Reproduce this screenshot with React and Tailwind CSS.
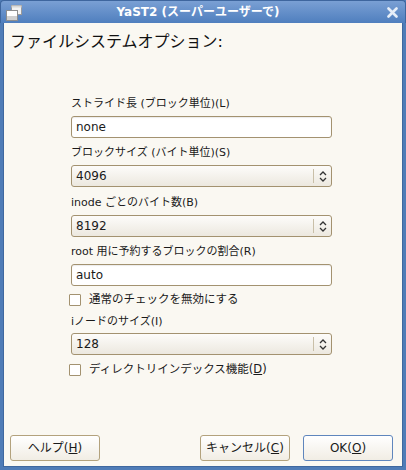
import React from "react";

const font = { fontFamily: '"DejaVu Sans", "Noto Sans CJK JP", sans-serif' };

function Field({ value }) {
  return (
    <div className="h-[22px] w-[261px] rounded-[3px] border border-[#a39270] bg-white flex items-center px-[4px] text-[12px] text-[#1a1a1a] shadow-[inset_0_1px_1px_rgba(0,0,0,0.08)]">
      {value}
    </div>
  );
}

function Select({ value }) {
  return (
    <div className="h-[22px] w-[261px] rounded-[3px] border border-[#a39270] bg-gradient-to-b from-[#fdfcfa] to-[#ece8df] flex items-center text-[12px] text-[#1a1a1a]">
      <div className="flex-1 px-[4px]">{value}</div>
      <div className="h-[14px] w-px bg-[#c9bfa8]" />
      <div className="w-[17px] flex items-center justify-center">
        <svg width="8" height="11" viewBox="0 0 8 11">
          <path d="M1 4 L4 1 L7 4" fill="none" stroke="#333" strokeWidth="1.3" />
          <path d="M1 7 L4 10 L7 7" fill="none" stroke="#333" strokeWidth="1.3" />
        </svg>
      </div>
    </div>
  );
}

function Check({ children }) {
  return (
    <div className="h-[16px] flex items-center -ml-[2px]">
      <div className="w-[12px] h-[12px] rounded-[1px] border border-[#a39270] bg-white" />
      <span className="ml-[8px] text-[11.5px] text-[#1a1a1a]">{children}</span>
    </div>
  );
}

function Btn({ children, primary }) {
  return (
    <div
      className={`w-[90px] h-[26px] rounded-[3px] border flex items-center justify-center text-[12px] text-[#1a1a1a] bg-gradient-to-b from-[#ffffff] to-[#f1ede4] ${
        primary ? "border-[#5f86bd]" : "border-[#b3a27d]"
      }`}
    >
      {children}
    </div>
  );
}

export default function App() {
  return (
    <div className="w-[406px] h-[470px] flex flex-col bg-[#4f7cb7]" style={font}>
      <div className="h-[23px] flex items-center relative bg-gradient-to-b from-[#7aa0d4] to-[#4f7fbe] border-t border-x border-[#3e669e] rounded-t-[4px]">
        <svg className="absolute left-[4px] top-[4px]" width="18" height="16" viewBox="0 0 18 16">
          <rect x="6.5" y="0.5" width="10" height="9" fill="#f2f2f2" stroke="#9a9a9a" />
          <rect x="6.5" y="0.5" width="10" height="2" fill="#d8d8d8" />
          <rect x="1.5" y="5.5" width="11" height="10" fill="#ffffff" stroke="#8e8e8e" />
          <rect x="2" y="11" width="10" height="4" fill="#cfcfcf" />
        </svg>
        <div className="flex-1 text-center text-white font-bold text-[12px] leading-none pr-[10px]">YaST2 (スーパーユーザーで)</div>
        <svg className="absolute right-[7px] top-[6px]" width="11" height="11" viewBox="0 0 11 11">
          <path d="M1.5 1.5 L9.5 9.5 M9.5 1.5 L1.5 9.5" stroke="#e6eef8" strokeWidth="2.6" strokeLinecap="round" />
        </svg>
      </div>
      <div className="flex-1 flex flex-col bg-[#faf8f2] mx-[3px] mb-[3px] border border-[#3f689f] border-t-0">
        <div className="pl-[6px] pt-[9px] text-[16px] leading-[20px] text-[#111]">ファイルシステムオプション:</div>
        <div className="pl-[67px] pt-[44px] flex flex-col text-[11px] text-[#1a1a1a]">
          <div className="h-[16px] leading-[16px]">ストライド長 (ブロック単位)(L)</div>
          <div className="mt-[4px]"><Field value="none" /></div>
          <div className="mt-[7px] h-[16px] leading-[16px]">ブロックサイズ (バイト単位)(S)</div>
          <div className="mt-[4px]"><Select value="4096" /></div>
          <div className="mt-[8px] h-[16px] leading-[16px]">inode ごとのバイト数(B)</div>
          <div className="mt-[4px]"><Select value="8192" /></div>
          <div className="mt-[7px] h-[16px] leading-[16px]">root 用に予約するブロックの割合(R)</div>
          <div className="mt-[4px]"><Field value="auto" /></div>
          <div className="mt-[6px]"><Check>通常のチェックを無効にする</Check></div>
          <div className="mt-[6px] h-[16px] leading-[16px]">iノードのサイズ(I)</div>
          <div className="mt-[3px]"><Select value="128" /></div>
          <div className="mt-[7px]">
            <Check>
              ディレクトリインデックス機能(<span className="underline">D</span>)
            </Check>
          </div>
        </div>
        <div className="mt-auto mb-[5px] flex items-center pl-[6px] pr-[9px]">
          <Btn>
            ヘルプ(<span className="underline">H</span>)
          </Btn>
          <div className="flex-1" />
          <Btn>
            キャンセル(<span className="underline">C</span>)
          </Btn>
          <div className="w-[13px]" />
          <Btn primary>
            OK(<span className="underline">O</span>)
          </Btn>
        </div>
      </div>
    </div>
  );
}
